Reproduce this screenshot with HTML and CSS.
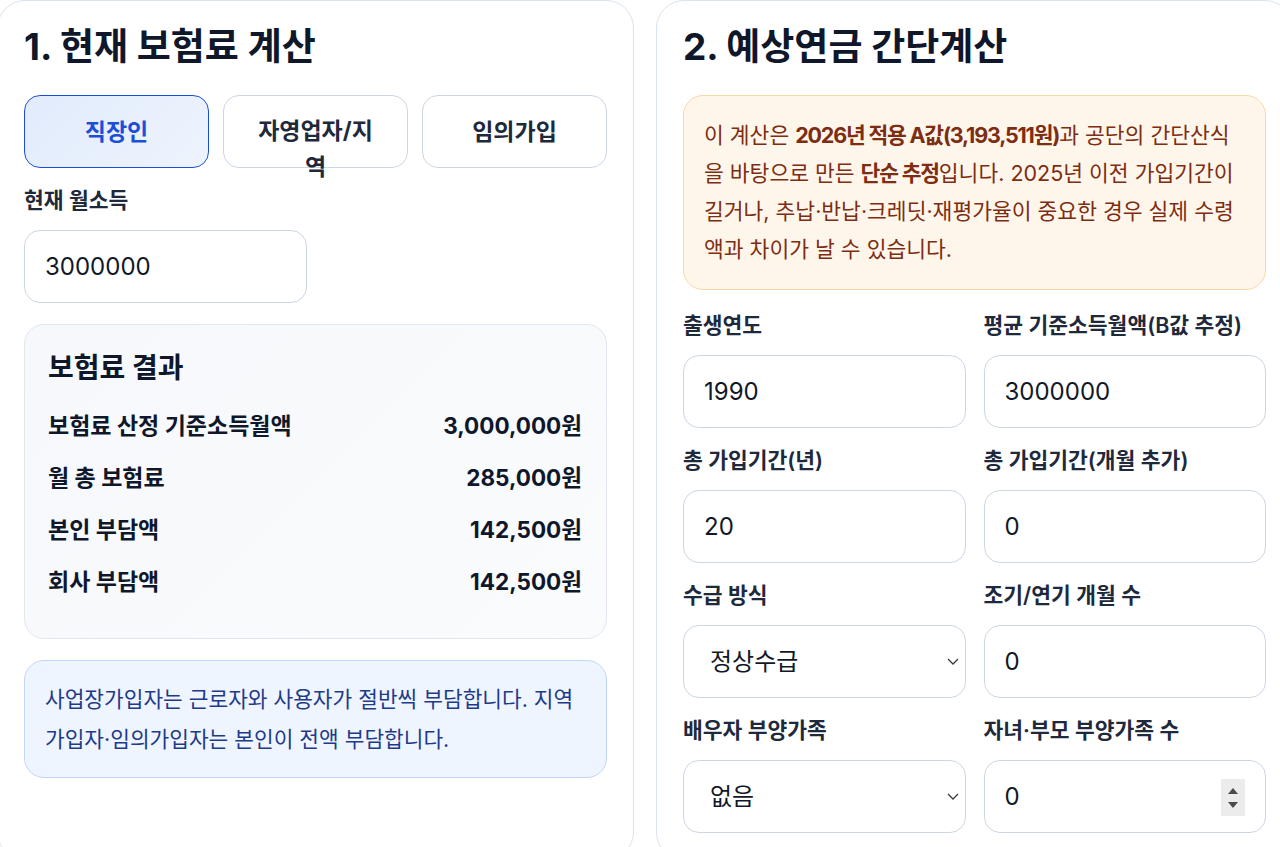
FILE: index.html
```html
<!DOCTYPE html>
<html lang="ko">
<head>
<meta charset="utf-8">
<title>국민연금 계산기</title>
<link rel="stylesheet" href="styles.css">
</head>
<body>
<main class="layout">
  <section class="card">
    <h2 class="card-title">1. 현재 보험료 계산</h2>
    <div class="tabs">
      <button class="tab active" type="button">직장인</button>
      <button class="tab" type="button">자영업자/지역</button>
      <button class="tab" type="button">임의가입</button>
    </div>
    <label class="field-label" for="income">현재 월소득</label>
    <input class="control income" id="income" type="text" value="3000000">
    <div class="result">
      <h3 class="result-title">보험료 결과</h3>
      <div class="result-row"><span>보험료 산정 기준소득월액</span><span class="value">3,000,000원</span></div>
      <div class="result-row"><span>월 총 보험료</span><span class="value">285,000원</span></div>
      <div class="result-row"><span>본인 부담액</span><span class="value">142,500원</span></div>
      <div class="result-row"><span>회사 부담액</span><span class="value">142,500원</span></div>
    </div>
    <p class="note note-blue">사업장가입자는 근로자와 사용자가 절반씩 부담합니다. 지역가입자·임의가입자는 본인이 전액 부담합니다.</p>
  </section>

  <section class="card">
    <h2 class="card-title">2. 예상연금 간단계산</h2>
    <p class="note note-orange">이 계산은 <strong>2026년 적용 A값(3,193,511원)</strong>과 공단의 간단산식을 바탕으로 만든 <strong>단순 추정</strong>입니다. 2025년 이전 가입기간이 길거나, 추납·반납·크레딧·재평가율이 중요한 경우 실제 수령액과 차이가 날 수 있습니다.</p>
    <div class="fields">
      <div class="field">
        <label class="field-label" for="birth">출생연도</label>
        <input class="control" id="birth" type="text" value="1990">
      </div>
      <div class="field">
        <label class="field-label" for="bval">평균 기준소득월액(B값 추정)</label>
        <input class="control" id="bval" type="text" value="3000000">
      </div>
      <div class="field">
        <label class="field-label" for="years">총 가입기간(년)</label>
        <input class="control" id="years" type="text" value="20">
      </div>
      <div class="field">
        <label class="field-label" for="months">총 가입기간(개월 추가)</label>
        <input class="control" id="months" type="text" value="0">
      </div>
      <div class="field">
        <label class="field-label" for="mode">수급 방식</label>
        <div class="select-wrap">
          <select class="control select" id="mode">
            <option>정상수급</option>
            <option>조기수급</option>
            <option>연기수급</option>
          </select>
          <svg class="chevron" width="12" height="7" viewBox="0 0 12 7" aria-hidden="true"><path d="M1 1l5 5 5-5" fill="none" stroke="#3a3a3a" stroke-width="1.3"/></svg>
        </div>
      </div>
      <div class="field">
        <label class="field-label" for="shift">조기/연기 개월 수</label>
        <input class="control" id="shift" type="text" value="0">
      </div>
      <div class="field">
        <label class="field-label" for="spouse">배우자 부양가족</label>
        <div class="select-wrap">
          <select class="control select" id="spouse">
            <option>없음</option>
            <option>있음</option>
          </select>
          <svg class="chevron" width="12" height="7" viewBox="0 0 12 7" aria-hidden="true"><path d="M1 1l5 5 5-5" fill="none" stroke="#3a3a3a" stroke-width="1.3"/></svg>
        </div>
      </div>
      <div class="field">
        <label class="field-label" for="kids">자녀·부모 부양가족 수</label>
        <div class="number-wrap">
          <input class="control" id="kids" type="text" value="0">
          <span class="spinner" aria-hidden="true"><i class="up"></i><i class="down"></i></span>
        </div>
      </div>
    </div>
  </section>
</main>
</body>
</html>
```

FILE: styles.css
```css
html, body {
  margin: 0;
  padding: 0;
  overflow: hidden;
  background: #ffffff;
}

body {
  font-family: "Inter", "Noto Sans CJK KR", sans-serif;
  color: #1e293b;
}

.layout {
  display: grid;
  grid-template-columns: 637px 637px;
  column-gap: 22px;
  margin-left: -3px;
  align-items: stretch;
}

.card {
  background: #ffffff;
  border: 1px solid #dbe3ee;
  border-radius: 28px;
  padding: 23px 26px 26px;
  display: flex;
  flex-direction: column;
}

.card-title {
  margin: 0 0 25px;
  font-size: 37px;
  line-height: 46px;
  font-weight: 700;
  color: #0f172a;
}

.tabs {
  display: grid;
  grid-template-columns: repeat(3, 1fr);
  column-gap: 14px;
  margin-bottom: 17px;
}

.tab {
  height: 73px;
  padding: 17px 26px;
  border: 1.5px solid #cdd6e3;
  border-radius: 16px;
  background: #ffffff;
  font-family: inherit;
  font-size: 23px;
  line-height: 36px;
  font-weight: 700;
  color: #1e293b;
  text-align: center;
  overflow: visible;
}

.tab.active {
  border-color: #1d4ed8;
  background: linear-gradient(135deg, #e1ebfc 0%, #eef4fd 100%);
  color: #1d4ed8;
}

.field-label {
  display: block;
  font-size: 21.5px;
  line-height: 30px;
  font-weight: 600;
  color: #1e293b;
  margin-bottom: 15px;
}

.control {
  box-sizing: border-box;
  display: block;
  width: 100%;
  height: 73px;
  margin: 0;
  padding: 0 20px;
  border: 1.5px solid #cdd6e3;
  border-radius: 16px;
  background: #ffffff;
  font-family: inherit;
  font-size: 24px;
  color: #111827;
}

.control.income {
  width: 283px;
  margin-bottom: 21px;
}

.select-wrap,
.number-wrap {
  position: relative;
}

.select {
  appearance: none;
  -webkit-appearance: none;
  padding-left: 26px;
  padding-right: 40px;
}

.chevron {
  position: absolute;
  right: 7px;
  top: 33px;
  pointer-events: none;
}

.result {
  border: 1px solid #e1e7f0;
  border-radius: 20px;
  background: linear-gradient(135deg, #f6f8fb 0%, #f9fbfd 100%);
  padding: 26px 24px 30px 23px;
}

.result-title {
  margin: 0 0 15px;
  font-size: 28px;
  line-height: 34px;
  font-weight: 700;
  color: #0f172a;
}

.result-row {
  display: flex;
  justify-content: space-between;
  padding: 11px 0;
  font-size: 23px;
  line-height: 30px;
  font-weight: 700;
  color: #0f172a;
}

.result-row .value {
  font-size: 22.5px;
}

.note {
  margin: 0;
  border-radius: 20px;
}

.note-blue {
  margin-top: 21px;
  padding: 18px 20px;
  font-size: 21.4px;
  line-height: 40px;
  background: #eff5ff;
  border: 1px solid #bfd7fb;
  color: #1e3a8a;
}

.note-orange {
  padding: 20px 19px 21px 20px;
  font-size: 21.5px;
  line-height: 38px;
  background: #fff6eb;
  border: 1px solid #fbd7a8;
  color: #7c2d12;
}

.note-orange strong {
  font-weight: 700;
  letter-spacing: -1.2px;
}

.fields {
  margin-top: 20px;
  display: grid;
  grid-template-columns: 1fr 1fr;
  column-gap: 18px;
  row-gap: 17px;
}

.spinner {
  position: absolute;
  right: 21px;
  top: 19px;
  width: 24px;
  height: 37px;
  background: #ececec;
  display: flex;
  flex-direction: column;
  align-items: center;
  justify-content: center;
  gap: 8px;
}

.spinner i {
  display: block;
  width: 0;
  height: 0;
  border-left: 5px solid transparent;
  border-right: 5px solid transparent;
}

.spinner .up {
  border-bottom: 6px solid #4b4b4b;
}

.spinner .down {
  border-top: 6px solid #4b4b4b;
}
```
